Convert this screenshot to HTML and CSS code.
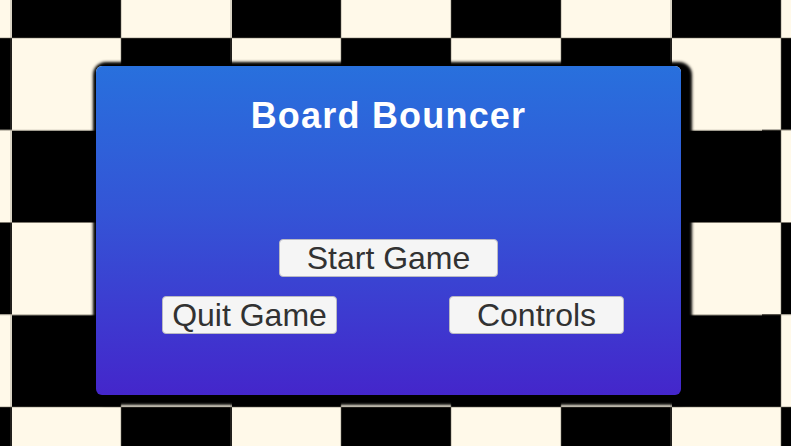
FILE: index.html
```html
<!DOCTYPE html>
<html lang="en">
<head>
  <meta charset="UTF-8">
  <meta name="viewport" content="width=device-width, initial-scale=1.0">
  <title>Board Bouncer</title>
  <link rel="stylesheet" href="styles.css">
</head>
<body>
  <div class="menu-panel">
    <h1 class="title">Board Bouncer</h1>

    <div class="row row-center">
      <button class="menu-btn btn-start">Start Game</button>
    </div>

    <div class="row row-split">
      <button class="menu-btn btn-side">Quit Game</button>
      <button class="menu-btn btn-side">Controls</button>
    </div>
  </div>
</body>
</html>
```

FILE: styles.css
```css
* {
  margin: 0;
  padding: 0;
  box-sizing: border-box;
}

html,
body {
  width: 791px;
  height: 446px;
  overflow: hidden;
}

body {
  font-family: 'Liberation Sans', Arial, sans-serif;
  background-color: #fff9e9;
  /* grid lines + checkerboard */
  background-image:
    linear-gradient(90deg, rgba(120, 114, 100, 0.55) 1px, transparent 1px),
    linear-gradient(rgba(120, 114, 100, 0.55) 1px, transparent 1px),
    conic-gradient(#000 25%, #fff9e9 0 50%, #000 0 75%, #fff9e9 0);
  background-size: 110px 100%, 100% 92.25px, 220px 184.5px;
  background-position: 10.5px 0, 0 37.5px, 11px 38px;
  padding: 66px 0 0 96px;
}

.menu-panel {
  width: 585px;
  height: 329px;
  border-radius: 6px;
  background: linear-gradient(180deg, #2870dd 0%, #3454d6 45%, #4426cb 100%);
  box-shadow: 4px 3px 3px 7px #000;
  padding-top: 32px;
}

.title {
  font-size: 36px;
  line-height: 36px;
  font-weight: 700;
  color: #ffffff;
  text-align: center;
  letter-spacing: 1.2px;
}

.row {
  display: flex;
}

.row-center {
  justify-content: center;
  margin-top: 105px;
}

.row-split {
  margin-top: 19px;
  padding-left: 66px;
  gap: 112px;
}

.menu-btn {
  height: 38px;
  font-family: 'Liberation Sans', Arial, sans-serif;
  font-size: 32px;
  line-height: 37px;
  color: #323232;
  background: #f5f5f5;
  border: 1px solid #b9b9c4;
  border-radius: 4px;
  text-align: center;
}

.btn-start {
  width: 219px;
}

.btn-side {
  width: 175px;
}
```
